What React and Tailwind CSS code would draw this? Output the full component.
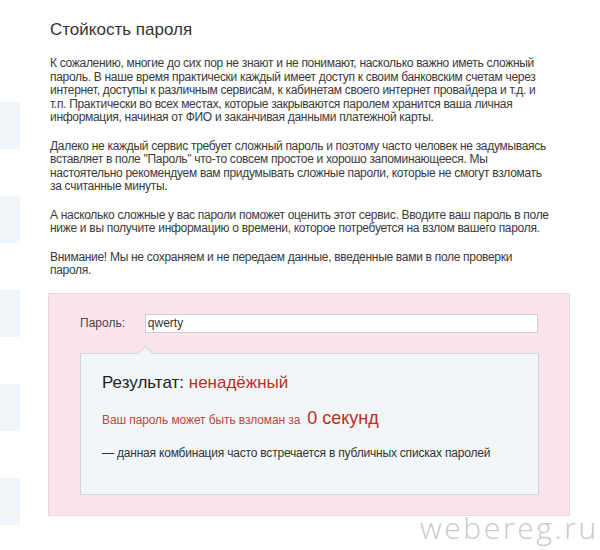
import React, { useState } from "react";

const paragraphs = [
  "К сожалению, многие до сих пор не знают и не понимают, насколько важно иметь сложный пароль. В наше время практически каждый имеет доступ к своим банковским счетам через интернет, доступы к различным сервисам, к кабинетам своего интернет провайдера и т.д. и т.п. Практически во всех местах, которые закрываются паролем хранится ваша личная информация, начиная от ФИО и заканчивая данными платежной карты.",
  "Далеко не каждый сервис требует сложный пароль и поэтому часто человек не задумываясь вставляет в поле \"Пароль\" что-то совсем простое и хорошо запоминающееся. Мы настоятельно рекомендуем вам придумывать сложные пароли, которые не смогут взломать за считанные минуты.",
  "А насколько сложные у вас пароли поможет оценить этот сервис. Вводите ваш пароль в поле ниже и вы получите информацию о времени, которое потребуется на взлом вашего пароля.",
  "Внимание! Мы не сохраняем и не передаем данные, введенные вами в поле проверки пароля.",
];

// left sidebar stubs, cut off by the screenshot
const SideStubs = () => (
  <div className="flex w-[20px] shrink-0 flex-col gap-[47px] pt-[102px]">
    {[0, 1, 2, 3, 4].map((i) => (
      <div key={i} className="h-[47px] bg-[#eff5f9]" />
    ))}
  </div>
);

function App() {
  const [password, setPassword] = useState("qwerty");

  return (
    <div className="relative flex h-[550px] w-[600px] overflow-hidden bg-white font-['Liberation_Sans',Arial,sans-serif] text-[#3a3a3a]">
      <SideStubs />

      <main className="ml-[28px] w-[524px] shrink-0 pt-[20px]">
        <h1 className="pl-[2px] text-[17px] leading-[20px] text-[#333]">Стойкость пароля</h1>

        <div className="mt-[17px] w-[504px] pl-[2px] text-[12px] leading-[13.5px] tracking-[-0.3px]">
          {paragraphs.map((p, i) => (
            <p key={i} className="mb-[15px]">
              {p}
            </p>
          ))}
        </div>

        {/* checker */}
        <div className="w-[522px] border border-[#e9d8de] bg-[#fbe4eb] px-[31px] pb-[20px] pt-[20px]">
          <div className="flex items-center">
            <label className="w-[65px] text-[12px] text-[#444]">Пароль:</label>
            <input
              value={password}
              onChange={(e) => setPassword(e.target.value)}
              className="h-[19px] w-[394px] border border-[#d3cdd0] bg-white px-[2px] text-[12px] text-[#333] outline-none"
            />
          </div>

          <div className="relative mt-[20px] h-[142px] w-[459px] border border-[#d4d7da] bg-[#f2f6f8] px-[21px] pt-[19px]">
            <div className="absolute left-[59px] top-[-6px] h-[11px] w-[11px] rotate-45 border-l border-t border-[#d4d7da] bg-[#f2f6f8]" />

            <div className="text-[17px] leading-[20px] text-[#222]">
              Результат: <span className="text-[#b8301f]">ненадёжный</span>
            </div>

            <div className="mt-[14px] flex items-baseline leading-[22px]">
              <span className="text-[12px] tracking-[-0.1px] text-[#c0473c]">Ваш пароль может быть взломан за</span>
              <span className="ml-[7px] text-[18px] text-[#bd2e22]">0 секунд</span>
            </div>

            <div className="mt-[14px] text-[12px] leading-[16px] tracking-[-0.2px] text-[#333]">
              — данная комбинация часто встречается в публичных списках паролей
            </div>
          </div>
        </div>
      </main>

      {/* watermark */}
      <div className="pointer-events-none absolute left-[420px] top-[510px] font-['Open_Sans',sans-serif] text-[30px] font-light leading-[36px] tracking-[2.6px] text-[#c9c9c9]">
        webereg.ru
      </div>
    </div>
  );
}

export default App;
